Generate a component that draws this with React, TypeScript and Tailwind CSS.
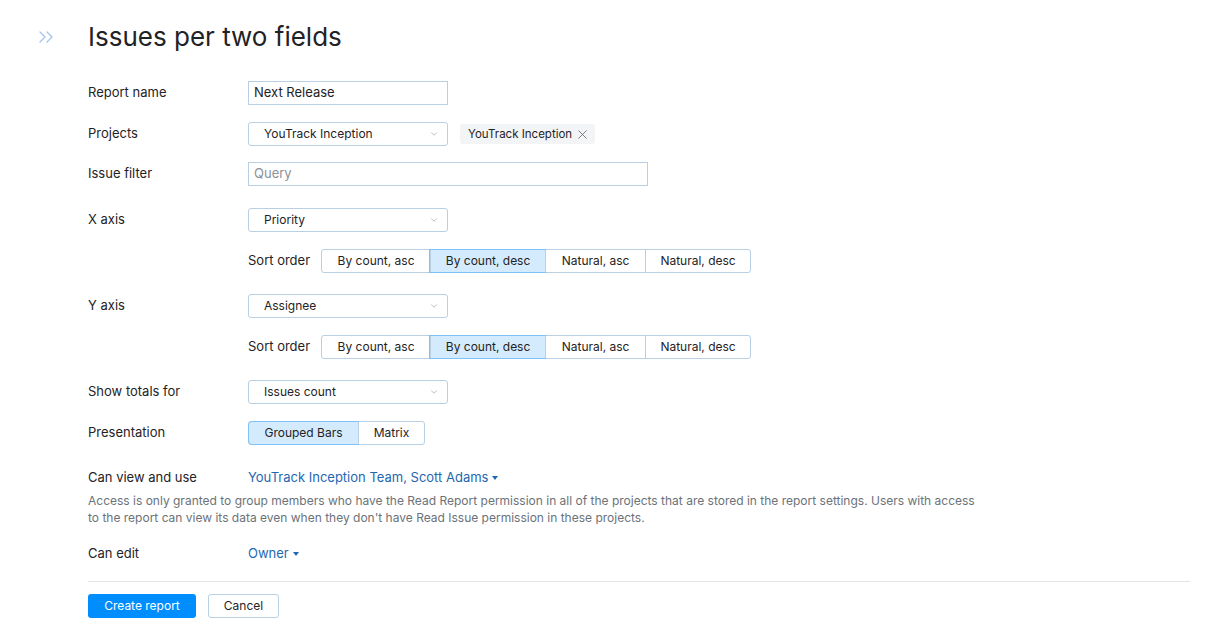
import { ChevronsRight, ChevronDown, X } from 'lucide-react';

const SORTS = ['By count, asc', 'By count, desc', 'Natural, asc', 'Natural, desc'];
const SORT_W = ['w-[108px]', 'w-[115px]', 'w-[100px]', 'w-[105px]'];

function Caret() {
  return (
    <svg width="6" height="4" viewBox="0 0 6 4" className="ml-[4px] mt-[1px]">
      <path d="M0 0h6L3 4z" fill="#1e67b1" />
    </svg>
  );
}

function Select({ value }: { value: string }) {
  return (
    <div className="flex h-6 w-[200px] items-center justify-between rounded-[3px] border border-[#b8cfe4] pl-[15px] pr-[8px] text-[12px] text-[#1f2326]">
      <span>{value}</span>
      <ChevronDown size={10} strokeWidth={1.5} className="text-[#8c96a0]" />
    </div>
  );
}

function Row({ label, className = '', children }: { label: string; className?: string; children: React.ReactNode }) {
  return (
    <div className={`flex items-center ${className}`}>
      <div className="w-[160px] shrink-0 text-[13px] text-[#1f2326]">{label}</div>
      {children}
    </div>
  );
}

function SortOrder({ className = '' }: { className?: string }) {
  return (
    <div className={`ml-[160px] flex items-center ${className}`}>
      <span className="mr-[11px] text-[13px] text-[#1f2326]">Sort order</span>
      <div className="flex h-6 rounded-[3px] border border-[#b8cfe4]">
        {SORTS.map((s, i) => (
          <div
            key={s}
            className={`flex items-center justify-center text-[12px] text-[#1f2326] ${SORT_W[i]} ${
              i > 0 ? 'border-l border-[#b8cfe4]' : ''
            } ${i === 1 ? 'bg-[#d4ebfd] outline outline-1 outline-[#7fc2f7]' : ''}`}
          >
            {s}
          </div>
        ))}
      </div>
    </div>
  );
}

export default function App() {
  return (
    <div
      className="min-h-screen bg-white pl-[34px] pr-[29px] text-[#1f2326]"
      style={{ fontFamily: 'Inter, "Noto Sans", sans-serif' }}
    >
      <div className="flex items-center pt-[20px]">
        <ChevronsRight size={24} strokeWidth={1.3} className="mr-[30px] text-[#a3c5ec]" />
        <h1 className="text-[26px] leading-[34px] font-normal text-[#1f2326]">Issues per two fields</h1>
      </div>

      <div className="ml-[54px]">
        <Row label="Report name" className="mt-[27px]">
          <div className="flex h-6 w-[200px] items-center border border-[#b8cfe4] px-[5px] text-[13px]">
            Next Release
          </div>
        </Row>

        <Row label="Projects" className="mt-[17px]">
          <Select value="YouTrack Inception" />
          <div className="ml-[12px] flex h-[20px] items-center rounded-[3px] bg-[#f3f4f6] pl-[8px] pr-[5px] text-[11.5px] text-[#1f2326]">
            <span className="mt-[1px]">YouTrack Inception</span>
            <X size={15} strokeWidth={1.3} className="ml-[3px] text-[#5b6570]" />
          </div>
        </Row>

        <Row label="Issue filter" className="mt-[16px]">
          <div className="flex h-6 w-[400px] items-center border border-[#b8cfe4] px-[5px] text-[13px] text-[#8a9197]">
            Query
          </div>
        </Row>

        <Row label="X axis" className="mt-[22px]">
          <Select value="Priority" />
        </Row>
        <SortOrder className="mt-[17px]" />

        <Row label="Y axis" className="mt-[21px]">
          <Select value="Assignee" />
        </Row>
        <SortOrder className="mt-[17px]" />

        <Row label="Show totals for" className="mt-[21px]">
          <Select value="Issues count" />
        </Row>

        <Row label="Presentation" className="mt-[17px]">
          <div className="flex h-6 rounded-[3px] border border-[#b8cfe4]">
            <div className="flex w-[109px] items-center justify-center rounded-l-[3px] bg-[#d4ebfd] text-[12px] outline outline-1 outline-[#7fc2f7]">
              Grouped Bars
            </div>
            <div className="flex w-[66px] items-center justify-center border-l border-[#b8cfe4] text-[12px]">
              Matrix
            </div>
          </div>
        </Row>

        <Row label="Can view and use" className="mt-[23px]">
          <span className="flex items-center text-[13px] text-[#1e67b1]">
            YouTrack Inception Team, Scott Adams
            <Caret />
          </span>
        </Row>
        <p className="mt-[4px] w-[900px] text-[12px] leading-[17px] text-[#6b7278]">
          Access is only granted to group members who have the Read Report permission in all of the projects that are
          stored in the report settings. Users with access to the report can view its data even when they don't have
          Read Issue permission in these projects.
        </p>

        <Row label="Can edit" className="mt-[18px]">
          <span className="flex items-center text-[13px] text-[#1e67b1]">
            Owner
            <Caret />
          </span>
        </Row>

        <div className="mt-[18px] border-t border-[#e3e5e8]" />

        <div className="mt-[12px] flex gap-[12px]">
          <button className="h-6 w-[108px] rounded-[3px] bg-[#008eff] text-[12px] text-white">Create report</button>
          <button className="h-6 w-[71px] rounded-[3px] border border-[#b8cfe4] text-[12px] text-[#1f2326]">
            Cancel
          </button>
        </div>
      </div>
    </div>
  );
}
